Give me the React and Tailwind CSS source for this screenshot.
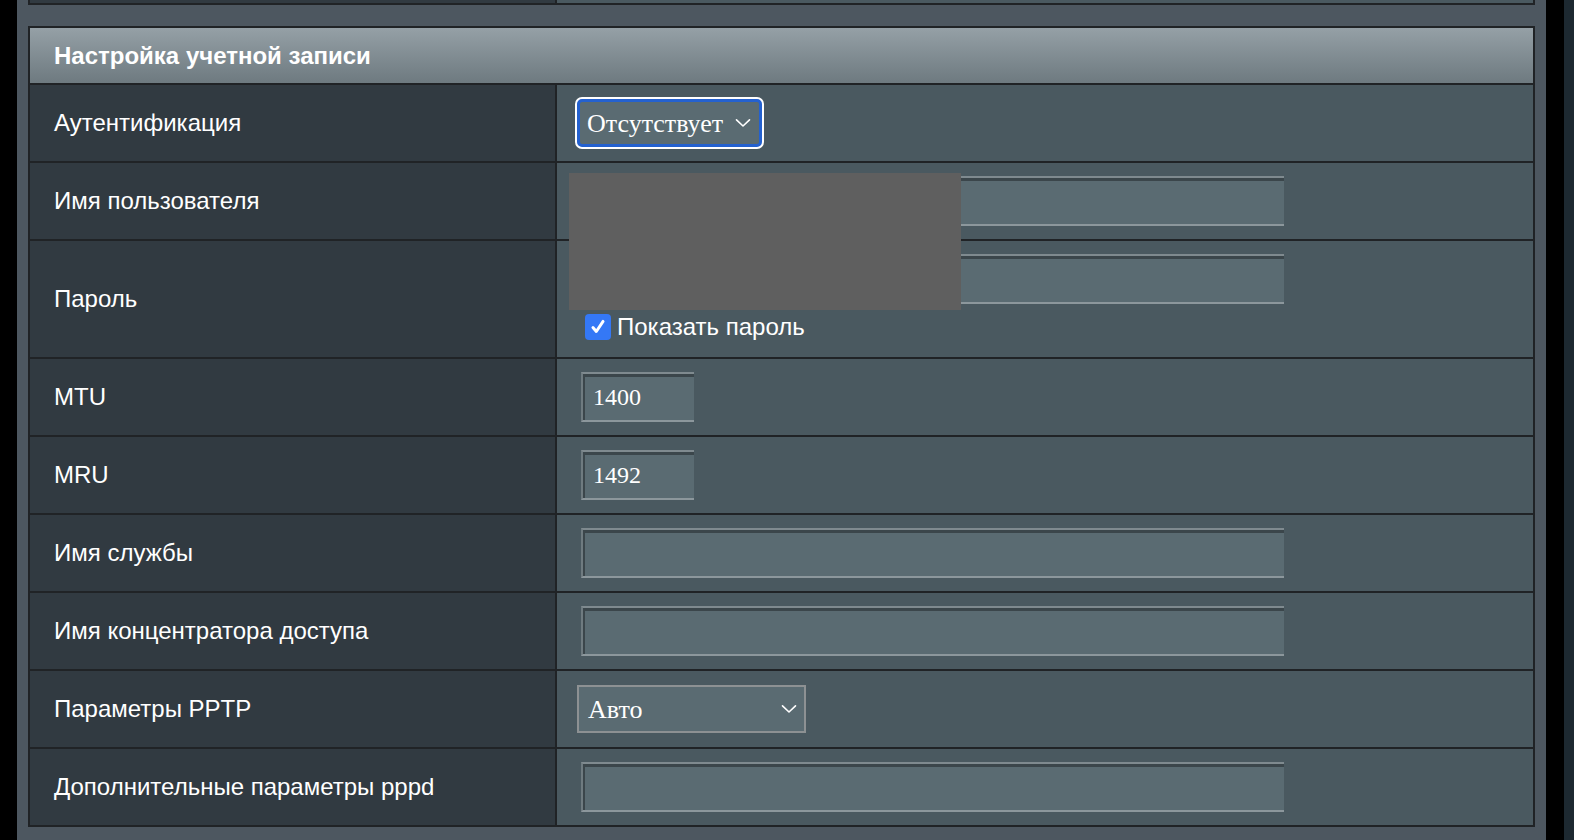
const sans = { fontFamily: '"Liberation Sans", Arial, sans-serif' };
const serif = { fontFamily: '"Liberation Serif", "Times New Roman", serif' };

const Chevron = ({ className }) => (
  <svg viewBox="0 0 16 10" className={className} fill="none" stroke="white" strokeWidth="1.6" strokeLinecap="round" strokeLinejoin="round">
    <path d="M1.5 1.8 L8 8 L14.5 1.8" />
  </svg>
);

const TextInput = ({ value = '', wide = true }) => (
  <div
    className={`${wide ? 'w-[703px]' : 'w-[113px]'} shrink-0 h-[50px] flex items-center pl-[10px] bg-[#5a6b72] border-t-2 border-l-2 border-b-2 border-t-[#7f8a8f] border-l-[#6f7b80] border-b-[#8c979c] shadow-[inset_2px_3px_0_#3b464b] text-white text-[24px]`}
    style={serif}
  >
    {value}
  </div>
);

const Row = ({ label, children, tall, last }) => (
  <div className={`flex ${last ? '' : 'border-b-2 border-[#202326]'}`}>
    <div className={`w-[527px] shrink-0 ${tall ? 'h-[116.3px]' : 'h-[76px]'} bg-[#313a41] border-r-2 border-[#202326] flex items-center pl-6 text-white text-[24px]`}>
      {label}
    </div>
    <div className="flex-1 bg-[#4a5960] flex items-center relative">{children}</div>
  </div>
);

export default function App() {
  return (
    <div className="w-[1574px] h-[840px] flex overflow-hidden bg-black" style={sans}>
      <div className="w-[17px] bg-black shrink-0" />
      <div className="w-[1529px] bg-[#4d5760] shrink-0 flex flex-col">
        {/* tail of the previous table */}
        <div className="ml-[11px] w-[1507px] h-[5px] flex border-x-2 border-b-2 border-[#202326]">
          <div className="w-[527px] bg-[#313a41] border-r-2 border-[#202326]" />
          <div className="flex-1 bg-[#4a5960]" />
        </div>

        <div className="mt-[21px] ml-[11px] w-[1507px] border-2 border-[#202326] flex flex-col">
          <div className="h-[57px] bg-gradient-to-b from-[#95a0a6] to-[#6e7a80] border-b-2 border-[#202326] flex items-center pl-6 text-white text-[24px] font-bold">
            Настройка учетной записи
          </div>

          <Row label="Аутентификация">
            <div className="ml-[18px] w-[189px] h-[52px] rounded-[7px] border-2 border-white bg-white">
              <div className="w-full h-full rounded-[5px] border-[3px] border-[#2461cf] bg-[#5a6b72] flex items-center justify-between pl-[7px] pr-[8px] text-white text-[26px]" style={serif}>
                <span>Отсутствует</span>
                <Chevron className="w-[16px] h-[10px]" />
              </div>
            </div>
          </Row>

          <Row label="Имя пользователя">
            <div className="pl-6">
              <TextInput />
            </div>
            <div className="absolute left-[12px] top-[10px] w-[392px] h-[137px] bg-[#5f5f5f] z-10" />
          </Row>

          <Row label="Пароль" tall>
            <div className="pl-6 flex flex-col pt-[1px]">
              <TextInput />
              <div className="flex items-center mt-[5px] ml-[4px] text-white text-[24px]">
                <span className="w-[26px] h-[26px] rounded-[4px] bg-[#3478f6] flex items-center justify-center mr-[6px]">
                  <svg viewBox="0 0 16 16" className="w-[18px] h-[18px]" fill="none" stroke="white" strokeWidth="2.6" strokeLinecap="round" strokeLinejoin="round">
                    <path d="M3.5 8.5 L6.5 12 L12.5 3" />
                  </svg>
                </span>
                <span>Показать пароль</span>
              </div>
            </div>
          </Row>

          <Row label="MTU">
            <div className="pl-6">
              <TextInput value="1400" wide={false} />
            </div>
          </Row>

          <Row label="MRU">
            <div className="pl-6">
              <TextInput value="1492" wide={false} />
            </div>
          </Row>

          <Row label="Имя службы">
            <div className="pl-6">
              <TextInput />
            </div>
          </Row>

          <Row label="Имя концентратора доступа">
            <div className="pl-6">
              <TextInput />
            </div>
          </Row>

          <Row label="Параметры PPTP">
            <div className="ml-5 w-[229px] h-[48px] border-2 border-[#8d9193] bg-[#5a6b72] flex items-center justify-between pl-[9px] pr-[7px] text-white text-[26px]" style={serif}>
              <span>Авто</span>
              <Chevron className="w-[16px] h-[10px]" />
            </div>
          </Row>

          <Row label="Дополнительные параметры pppd" last>
            <div className="pl-6">
              <TextInput />
            </div>
          </Row>
        </div>
      </div>
      <div className="w-[18px] bg-black shrink-0" />
      <div className="flex-1 bg-[#1d2931]" />
    </div>
  );
}
